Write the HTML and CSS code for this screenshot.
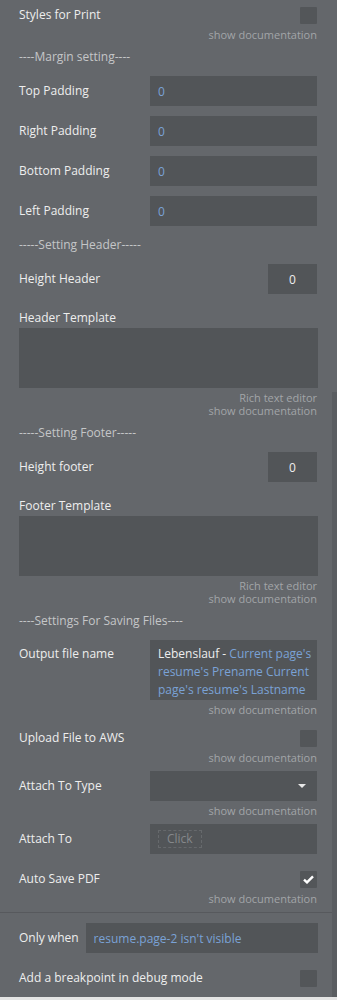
FILE: index.html
```html
<!DOCTYPE html>
<html lang="en">
  <head>
    <meta charset="UTF-8" />
    <meta name="viewport" content="width=device-width, initial-scale=1.0" />
    <title>Plugin settings</title>
    <link rel="stylesheet" href="styles.css">
  </head>
  <body>
    <main class="panel">
      <div class="row first">
        <span class="label">Styles for Print</span>
        <span class="checkbox"></span>
      </div>
      <div class="doc">show documentation</div>

      <div class="heading">----Margin setting----</div>
      <div class="row field">
        <span class="label">Top Padding</span>
        <div class="input wide blue">0</div>
      </div>
      <div class="row field">
        <span class="label">Right Padding</span>
        <div class="input wide blue">0</div>
      </div>
      <div class="row field">
        <span class="label">Bottom Padding</span>
        <div class="input wide blue">0</div>
      </div>
      <div class="row field">
        <span class="label">Left Padding</span>
        <div class="input wide blue">0</div>
      </div>

      <div class="heading">-----Setting Header-----</div>
      <div class="row field">
        <span class="label">Height Header</span>
        <div class="input small">0</div>
      </div>
      <div class="label block-label">Header Template</div>
      <div class="textarea"></div>
      <div class="doc">Rich text editor</div>
      <div class="doc flush">show documentation</div>

      <div class="heading">-----Setting Footer-----</div>
      <div class="row field">
        <span class="label">Height footer</span>
        <div class="input small">0</div>
      </div>
      <div class="label block-label">Footer Template</div>
      <div class="textarea"></div>
      <div class="doc">Rich text editor</div>
      <div class="doc flush">show documentation</div>

      <div class="heading">----Settings For Saving Files----</div>
      <div class="row field top">
        <span class="label">Output file name</span>
        <div class="input wide multi">Lebenslauf - <span class="blue">Current page's resume's Prename Current page's resume's Lastname</span></div>
      </div>
      <div class="doc">show documentation</div>

      <div class="row check-row">
        <span class="label">Upload File to AWS</span>
        <span class="checkbox"></span>
      </div>
      <div class="doc">show documentation</div>

      <div class="row field tight">
        <span class="label">Attach To Type</span>
        <div class="input wide dropdown"><span class="caret"></span></div>
      </div>
      <div class="doc">show documentation</div>

      <div class="row field tight">
        <span class="label">Attach To</span>
        <div class="input wide"><span class="click-btn">Click</span></div>
      </div>

      <div class="row check-row spaced">
        <span class="label">Auto Save PDF</span>
        <span class="checkbox">
          <svg width="11" height="9" viewBox="0 0 11 9"><path d="M1 4.6 L4 7.4 L10 1.4" fill="none" stroke="#fff" stroke-width="2.4"/></svg>
        </span>
      </div>
      <div class="doc">show documentation</div>

      <div class="separator"></div>

      <div class="row field only-when">
        <span class="label">Only when</span>
        <div class="input condition blue">resume.page-2 isn't visible</div>
      </div>

      <div class="row check-row spaced">
        <span class="label">Add a breakpoint in debug mode</span>
        <span class="checkbox"></span>
      </div>

      <div class="scrollbar"></div>
    </main>
  </body>
</html>
```

FILE: styles.css
```css
body {
  margin: 0;
  background-color: #e4e4e4;
  font-family: "Open Sans", "Liberation Sans", sans-serif;
}

.panel {
  position: relative;
  box-sizing: border-box;
  width: 337px;
  height: 997px;
  padding: 0 20px 0 19px;
  background-color: #64676b;
  color: #eeeeee;
  font-size: 12px;
  box-shadow: 0 1px 2px rgba(0, 0, 0, 0.3);
}

.row {
  display: flex;
  align-items: center;
  justify-content: space-between;
}

.label {
  line-height: 16px;
}

.first {
  height: 26px;
  padding-top: 2px;
}

.check-row {
  height: 20px;
}

.doc + .check-row {
  margin-top: 12px;
}

.spaced {
  margin-top: 15px;
}

.checkbox {
  display: flex;
  align-items: center;
  justify-content: center;
  width: 17px;
  height: 17px;
  background-color: #535659;
  border-radius: 1px;
}

.doc {
  margin-top: 3px;
  text-align: right;
  font-size: 11px;
  line-height: 13px;
  color: #a2a5a8;
}

.first + .doc,
.doc.flush {
  margin-top: 0;
}

.heading {
  margin-top: 6px;
  line-height: 20px;
  color: #c4c6c8;
}

.field + .heading {
  margin-top: 9px;
}

.field {
  margin-top: 10px;
}

.heading + .field {
  margin-top: 9px;
}

.tight {
  margin-top: 7px;
}

.input {
  box-sizing: border-box;
  height: 30px;
  padding: 0 8px;
  display: flex;
  align-items: center;
  background-color: #525558;
}

.wide {
  width: 167px;
}

.small {
  width: 49px;
  justify-content: center;
}

.blue {
  color: #7aa2d6;
}

.block-label {
  margin-top: 16px;
}

.textarea {
  height: 60px;
  margin-top: 2px;
  margin-right: -1px;
  background-color: #525558;
}

.top {
  align-items: flex-start;
}

.top .label {
  padding-top: 6px;
}

.multi {
  display: block;
  height: 60px;
  padding: 5px 4px 0 8px;
  line-height: 18px;
}

.dropdown {
  justify-content: flex-end;
  padding-right: 11px;
}

.caret {
  width: 0;
  height: 0;
  border-left: 4px solid transparent;
  border-right: 4px solid transparent;
  border-top: 4px solid #e8e8e8;
}

.click-btn {
  box-sizing: border-box;
  height: 18px;
  padding: 0 8px;
  border: 1px dashed #66696c;
  color: #85888b;
  line-height: 16px;
}

.separator {
  height: 1px;
  margin: 7px -20px 0 -19px;
  background-color: #57595d;
}

.only-when {
  justify-content: flex-start;
}

.condition {
  flex: 1;
  margin-left: 7px;
  margin-right: -1px;
}

.scrollbar {
  position: absolute;
  right: 0;
  top: 392px;
  bottom: 0;
  width: 5px;
  background-color: #5a5d61;
}
```
